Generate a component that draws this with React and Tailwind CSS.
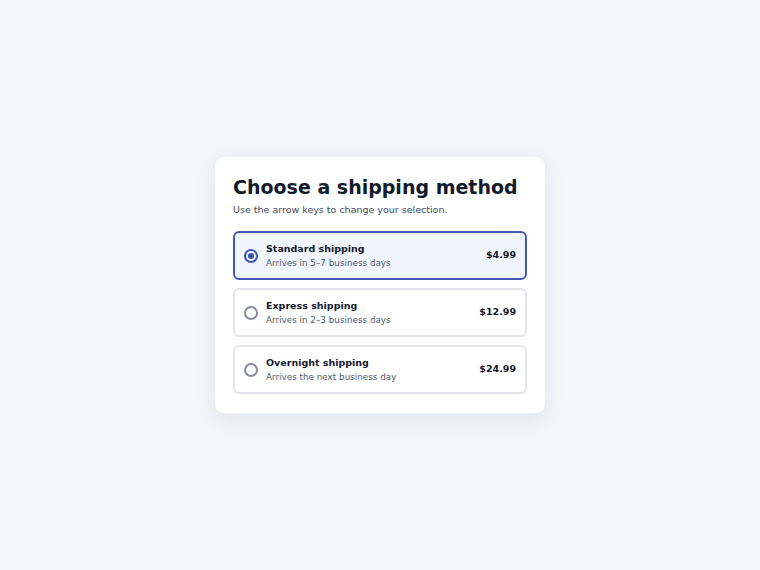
import { useState } from "react";

const options = [
    { id: "standard", name: "Standard shipping", eta: "Arrives in 5–7 business days", price: "$4.99" },
    { id: "express", name: "Express shipping", eta: "Arrives in 2–3 business days", price: "$12.99" },
    { id: "overnight", name: "Overnight shipping", eta: "Arrives the next business day", price: "$24.99" },
];

export default function App() {
    const [selected, setSelected] = useState("standard");

    return (
        <div className="flex items-center justify-center h-screen bg-[#f4f6fa] font-['DejaVu_Sans',sans-serif]">
            <div className="w-[332px] bg-white rounded-[10px] border border-[#eceef3] shadow-[0_6px_20px_rgba(30,40,80,0.08)] px-[18px] pt-[19px] pb-[19px]">
                <h1 className="text-[19px] leading-[23px] font-bold text-[#131a2c]">Choose a shipping method</h1>
                <p className="mt-[4px] text-[9.5px] leading-[14px] text-[#434a5b]">
                    Use the arrow keys to change your selection.
                </p>

                <div className="mt-[14px] flex flex-col gap-[8px]" role="radiogroup">
                    {options.map((o) => {
                        const on = selected === o.id;
                        return (
                            <button
                                key={o.id}
                                role="radio"
                                aria-checked={on}
                                onClick={() => setSelected(o.id)}
                                className={`flex items-center h-[49px] pl-[9px] pr-[9px] rounded-[6px] text-left border-2 ${
                                    on ? "border-[#4457b0] bg-[#f1f5fe]" : "border-[#e2e4ea] bg-white"
                                }`}
                            >
                                <span
                                    className={`flex items-center justify-center w-[14px] h-[14px] rounded-full border-2 ${
                                        on ? "border-[#4457b0]" : "border-[#878c99]"
                                    }`}
                                >
                                    {on && <span className="w-[6px] h-[6px] rounded-full bg-[#3a4fac]" />}
                                </span>
                                <span className="flex-1 ml-[8px]">
                                    <span className="block text-[9.5px] leading-[13px] font-bold text-[#131a2c]">{o.name}</span>
                                    <span className="block mt-[2px] text-[8.8px] leading-[12px] text-[#535a6a]">{o.eta}</span>
                                </span>
                                <span className="text-[9.5px] font-bold text-[#131a2c]">{o.price}</span>
                            </button>
                        );
                    })}
                </div>
            </div>
        </div>
    );
}
